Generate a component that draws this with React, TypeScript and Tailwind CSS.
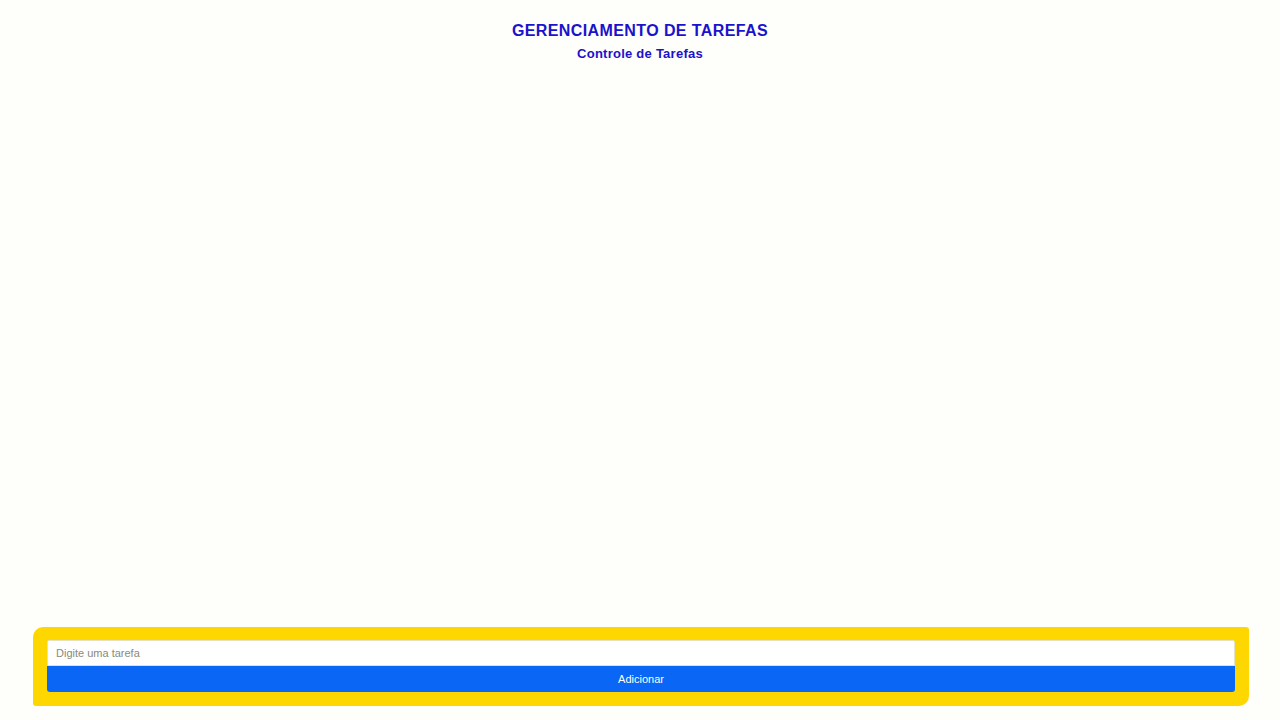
import React from 'react';

export default function App() {
  return (
    <div className="min-h-screen flex flex-col bg-[#fefefa] font-['Liberation_Sans',Arial,sans-serif]">
      <header className="pt-[21px] text-center text-[#1a12cc]">
        <h1 className="text-[16px] leading-[20px] font-bold tracking-[0.4px]">GERENCIAMENTO DE TAREFAS</h1>
        <p className="mt-[5px] text-[13px] leading-[16px] font-bold tracking-[0.25px]">Controle de Tarefas</p>
      </header>

      <main className="flex-1" />

      <footer className="ml-[33px] mr-[31px] mb-[14px] bg-[#ffd700] rounded-tl-[10px] rounded-br-[10px] rounded-tr-[3px] rounded-bl-[3px] px-[14px] pt-[13px] pb-[14px]">
        <form className="flex flex-col" onSubmit={(e) => e.preventDefault()}>
          <input
            type="text"
            placeholder="Digite uma tarefa"
            className="h-[26px] w-full bg-white border border-[#e6e2c8] rounded-t-[2px] px-[8px] text-[11px] text-gray-700 placeholder:text-[#8a8a7a] outline-none"
          />
          <button
            type="submit"
            className="h-[26px] w-full bg-[#0a66f5] text-white text-[11px] rounded-b-[3px]"
          >
            Adicionar
          </button>
        </form>
      </footer>
    </div>
  );
}
